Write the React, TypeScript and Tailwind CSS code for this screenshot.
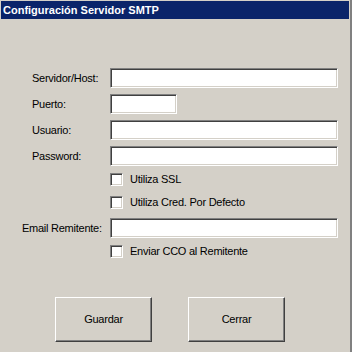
import React from 'react';

const sunken =
  'border border-t-[#808080] border-l-[#808080] border-b-white border-r-white shadow-[inset_1px_1px_0_#404040,inset_-1px_-1px_0_#d4d0c8] bg-white';

const raised =
  'border border-t-white border-l-white border-b-[#404040] border-r-[#404040] shadow-[inset_-1px_-1px_0_#808080] bg-[#d4d0c8]';

function Field({ label, labelCls, width, mt }: { label: string; labelCls: string; width: string; mt: string }) {
  return (
    <div className={`flex items-center h-[20px] ${mt}`}>
      <label className={`shrink-0 text-[11px] tracking-[-0.25px] text-black ${labelCls}`}>{label}</label>
      <div className={`shrink-0 h-[20px] ${width} ${sunken}`} />
    </div>
  );
}

function Check({ label, mt }: { label: string; mt: string }) {
  return (
    <div className={`flex items-center h-[13px] pl-[110px] ${mt}`}>
      <div className={`w-[13px] h-[13px] ${sunken}`} />
      <span className="ml-[7px] text-[11px] tracking-[-0.25px] text-black">{label}</span>
    </div>
  );
}

export default function App() {
  return (
    <div
      className="w-[352px] h-[352px] bg-[#d4d0c8] border-r-2 border-[#808080] flex flex-col"
      style={{ fontFamily: '"Liberation Sans", Arial, sans-serif' }}
    >
      <div className="mt-[1px] ml-[1px] mr-[1px] h-[18px] bg-[#0a246a] flex items-center pl-[2px]">
        <span className="text-white text-[11px] font-bold">Configuración Servidor SMTP</span>
      </div>

      <Field label="Servidor/Host:" labelCls="ml-[32px] w-[78px]" width="w-[228px]" mt="mt-[49px]" />
      <Field label="Puerto:" labelCls="ml-[32px] w-[78px]" width="w-[67px]" mt="mt-[6px]" />
      <Field label="Usuario:" labelCls="ml-[32px] w-[78px]" width="w-[228px]" mt="mt-[6px]" />
      <Field label="Password:" labelCls="ml-[32px] w-[78px]" width="w-[228px]" mt="mt-[6px]" />

      <Check label="Utiliza SSL" mt="mt-[7px]" />
      <Check label="Utiliza Cred. Por Defecto" mt="mt-[10px]" />

      <Field label="Email Remitente:" labelCls="ml-[22px] w-[88px]" width="w-[228px]" mt="mt-[9px]" />

      <Check label="Enviar CCO al Remitente" mt="mt-[7px]" />

      <div className="flex pl-[55px] gap-[36px] mt-[39px]">
        <button className={`w-[97px] h-[45px] text-[11px] tracking-[-0.25px] text-black ${raised}`}>Guardar</button>
        <button className={`w-[97px] h-[45px] text-[11px] tracking-[-0.25px] text-black ${raised}`}>Cerrar</button>
      </div>
    </div>
  );
}
